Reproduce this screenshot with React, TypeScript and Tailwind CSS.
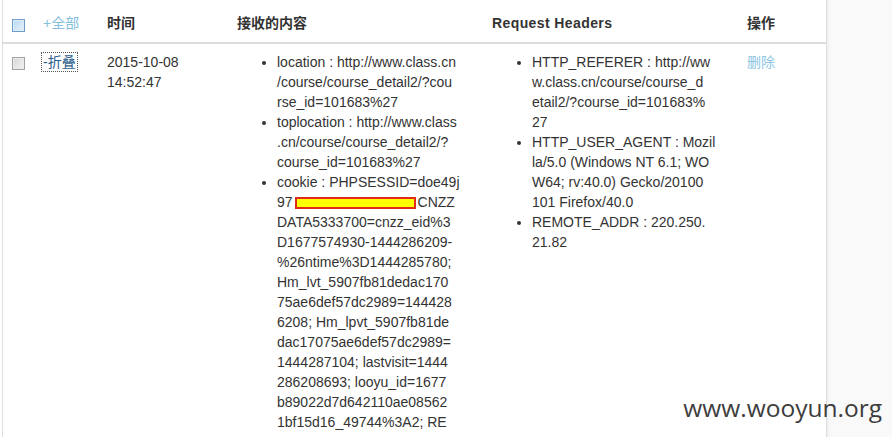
import React from 'react';

const contentItems: React.ReactNode[][] = [
  ['location : http://www.class.cn', '/course/course_detail2/?cou', 'rse_id=101683%27'],
  ['toplocation : http://www.class', '.cn/course/course_detail2/?', 'course_id=101683%27'],
  [
    'cookie : PHPSESSID=doe49j',
    <>
      97
      <span className="inline-block align-middle w-[121px] h-[12px] mx-[2px] -mt-[1px] bg-[#ffff00] border-2 border-[#e02a1a]" />
      CNZZ
    </>,
    'DATA5333700=cnzz_eid%3',
    'D1677574930-1444286209-',
    '%26ntime%3D1444285780;',
    'Hm_lvt_5907fb81dedac170',
    '75ae6def57dc2989=144428',
    '6208; Hm_lpvt_5907fb81de',
    'dac17075ae6def57dc2989=',
    '1444287104; lastvisit=1444',
    '286208693; looyu_id=1677',
    'b89022d7d642110ae08562',
    '1bf15d16_49744%3A2; RE',
  ],
];

const headerItems: string[][] = [
  ['HTTP_REFERER : http://ww', 'w.class.cn/course/course_d', 'etail2/?course_id=101683%', '27'],
  ['HTTP_USER_AGENT : Mozil', 'la/5.0 (Windows NT 6.1; WO', 'W64; rv:40.0) Gecko/20100', '101 Firefox/40.0'],
  ['REMOTE_ADDR : 220.250.', '21.82'],
];

const Checkbox: React.FC<{ blue?: boolean }> = ({ blue }) => (
  <span
    className={
      blue
        ? 'block w-[13px] h-[13px] border border-[#6f9cc8] bg-gradient-to-br from-[#b8d8f2] to-[#e6f2fb] shadow-[inset_0_0_0_1px_#dcecf9]'
        : 'block w-[13px] h-[13px] border border-[#a3a3a3] bg-gradient-to-br from-[#d6d6d6] to-[#f4f4f4] shadow-[inset_0_0_0_1px_#ececec]'
    }
  />
);

const BulletList: React.FC<{ items: React.ReactNode[][] }> = ({ items }) => (
  <ul className="list-disc pl-[40px] m-0">
    {items.map((lines, i) => (
      <li key={i}>
        {lines.map((line, j) => (
          <span key={j} className="block whitespace-nowrap">
            {line}
          </span>
        ))}
      </li>
    ))}
  </ul>
);

export default function App() {
  return (
    <div
      className="relative flex w-[892px] h-[437px] overflow-hidden bg-white text-[14px] leading-[20px] text-[#333]"
      style={{ fontFamily: '"Liberation Sans", Arial, "Noto Sans CJK SC", sans-serif' }}
    >
      <div className="ml-[2px] w-[825px] shrink-0 border-l border-r border-[#dedede] bg-white">
        <table className="table-fixed border-collapse w-[823px]">
          <colgroup>
            <col className="w-[32px]" />
            <col className="w-[64px]" />
            <col className="w-[130px]" />
            <col className="w-[255px]" />
            <col className="w-[255px]" />
            <col className="w-[87px]" />
          </colgroup>
          <thead>
            <tr className="h-[43px] border-b-2 border-[#dddddd] text-left">
              <th className="pl-[9px] pt-[8px] align-middle">
                <Checkbox blue />
              </th>
              <th className="px-[8px] pt-[4px] font-normal text-[#86bfdc] align-middle">+全部</th>
              <th className="px-[8px] pt-[4px] font-bold align-middle">时间</th>
              <th className="px-[8px] pt-[4px] font-bold align-middle">接收的内容</th>
              <th className="px-[8px] pt-[4px] font-bold align-middle tracking-[0.4px]">Request Headers</th>
              <th className="px-[8px] pt-[4px] font-bold align-middle">操作</th>
            </tr>
          </thead>
          <tbody>
            <tr className="align-top">
              <td className="pl-[9px] pt-[13px]">
                <Checkbox />
              </td>
              <td className="px-[7px] pt-[8px]">
                <span className="inline-block px-px leading-[18px] text-[#2b5d8c] outline outline-1 outline-dotted outline-[#555]">
                  -折叠
                </span>
              </td>
              <td className="px-[8px] pt-[8px]">
                <div>2015-10-08</div>
                <div>14:52:47</div>
              </td>
              <td className="px-[8px] pt-[8px]">
                <BulletList items={contentItems} />
              </td>
              <td className="px-[8px] pt-[8px]">
                <BulletList items={headerItems} />
              </td>
              <td className="px-[8px] pt-[8px]">
                <span className="text-[#8cc6e3]">删除</span>
              </td>
            </tr>
          </tbody>
        </table>
      </div>
      <div className="flex-1 bg-[#f9f9f9] shadow-[inset_3px_0_3px_-2px_#eaeaea]" />
      <div
        className="absolute right-[10px] bottom-[14px] text-[24.5px] leading-[30px] text-[#3d3d3d]"
        style={{ fontFamily: '"Open Sans", sans-serif' }}
      >
        www.wooyun.org
      </div>
    </div>
  );
}
